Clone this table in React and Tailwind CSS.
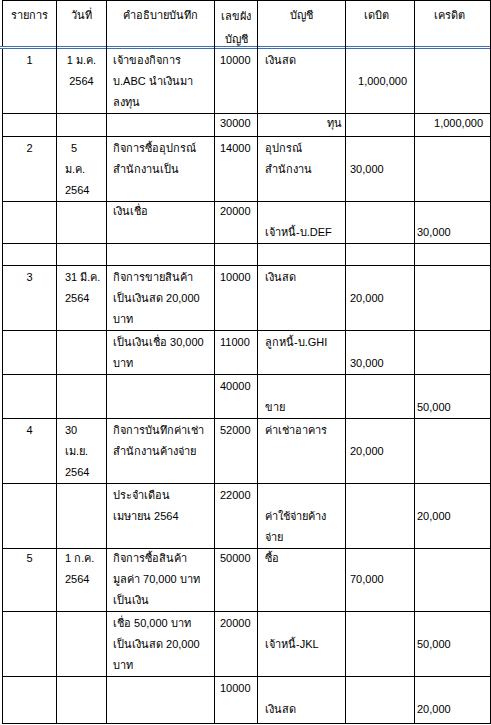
const COLS = 'grid grid-cols-[54px_50px_108px_43px_88px_69px_76px]'

const rows = [
  {
    h: 'h-[63px]',
    cells: [['1'], ['1 ม.ค.', '2564'], ['เจ้าของกิจการ', 'บ.ABC นำเงินมา', 'ลงทุน'], ['10000'], ['เงินสด'], ['', '1,000,000'], []],
    align: { 1: 'center', 5: 'right' },
  },
  {
    h: 'h-[25px]',
    cells: [[], [], [], ['30000'], ['ทุน'], [], ['1,000,000']],
    align: { 4: 'right', 6: 'right' },
  },
  {
    h: 'h-[63px]',
    cells: [['2'], ['\u00a0\u00a05', 'ม.ค.', '2564'], ['กิจการซื้ออุปกรณ์', 'สำนักงานเป็น'], ['14000'], ['อุปกรณ์', 'สำนักงาน'], ['', '30,000'], []],
  },
  {
    h: 'h-[43px]',
    cells: [[], [], ['เงินเชื่อ'], ['20000'], ['', 'เจ้าหนี้-บ.DEF'], [], ['', '30,000']],
  },
  { h: 'h-[23px]', cells: [[], [], [], [], [], [], []] },
  {
    h: 'h-[65px]',
    cells: [['3'], ['31 มี.ค.', '2564'], ['กิจการขายสินค้า', 'เป็นเงินสด 20,000', 'บาท'], ['10000'], ['เงินสด'], ['', '20,000'], []],
  },
  {
    h: 'h-[44px]',
    cells: [[], [], ['เป็นเงินเชื่อ 30,000', 'บาท'], ['11000'], ['ลูกหนี้-บ.GHI'], ['', '30,000'], []],
  },
  {
    h: 'h-[44px]',
    cells: [[], [], [], ['40000'], ['', 'ขาย'], [], ['', '50,000']],
  },
  {
    h: 'h-[65px]',
    cells: [['4'], ['30', 'เม.ย.', '2564'], ['กิจการบันทึกค่าเช่า', 'สำนักงานค้างจ่าย'], ['52000'], ['ค่าเช่าอาคาร'], ['', '20,000'], []],
  },
  {
    h: 'h-[63px]',
    cells: [[], [], ['ประจำเดือน', 'เมษายน 2564'], ['22000'], ['', 'ค่าใช้จ่ายค้าง', 'จ่าย'], [], ['', '20,000']],
  },
  {
    h: 'h-[65px]',
    cells: [['5'], ['1 ก.ค.', '2564'], ['กิจการซื้อสินค้า', 'มูลค่า 70,000 บาท', 'เป็นเงิน'], ['50000'], ['ซื้อ'], ['', '70,000'], []],
  },
  {
    h: 'h-[65px]',
    cells: [[], [], ['เชื่อ 50,000 บาท', 'เป็นเงินสด 20,000', 'บาท'], ['20000'], ['', 'เจ้าหนี้-JKL'], [], ['', '50,000']],
  },
  {
    h: 'h-[47px]',
    cells: [[], [], [], ['10000'], ['', 'เงินสด'], [], ['', '20,000']],
  },
]

// padding per column (left aligned)
const pad = ['px-[2px]', 'pl-[8px]', 'pl-[6px]', 'pl-[5px]', 'pl-[7px]', 'pl-[4px]', 'pl-[2px]']

const Cell = ({ lines, col, align }) => {
  let cls = pad[col]
  if (col === 0) cls = 'text-center'
  if (align === 'center') cls = 'text-center'
  if (align === 'right') cls = 'text-right pr-[3px]'
  if (align === 'right' && col !== 4) cls = 'text-right pr-[7px]'
  return (
    <div className={`border-r border-b border-black pt-[1px] whitespace-nowrap ${cls}`}>
      {lines.map((l, i) => (
        <div key={i}>{l === '' ? '\u00a0' : l}</div>
      ))}
    </div>
  )
}

export default function App() {
  return (
    <div className="bg-white w-[491px] h-[725px] overflow-hidden text-[11px] leading-[21px] text-black font-['Liberation_Sans','Noto_Sans',sans-serif]">
      <div className="ml-[2px] w-[489px] border-l border-t border-black">
        {/* header */}
        <div className={`${COLS} h-[45px] text-center`}>
          <div className="border-r border-black pt-[4px]">รายการ</div>
          <div className="border-r border-black pt-[4px]">วันที่</div>
          <div className="border-r border-black pt-[4px]">คำอธิบายบันทึก</div>
          <div className="border-r border-black pt-[4px] leading-[23px]">
            <div>เลขผัง</div>
            <div>บัญชี</div>
          </div>
          <div className="border-r border-black pt-[4px]">บัญชี</div>
          <div className="border-r border-black pt-[4px] pr-[8px]">เดบิต</div>
          <div className="border-r border-black pt-[4px] pr-[6px]">เครดิต</div>
        </div>
      </div>
      {/* selection double line */}
      <div className="h-[3px] w-[491px] border-y border-[#3f6fb8]" />
      <div className="ml-[2px] w-[489px] border-l border-black">
        {rows.map((r, ri) => (
          <div key={ri} className={`${COLS} ${r.h}`}>
            {r.cells.map((c, ci) => (
              <Cell key={ci} lines={c} col={ci} align={r.align ? r.align[ci] : undefined} />
            ))}
          </div>
        ))}
      </div>
    </div>
  )
}
